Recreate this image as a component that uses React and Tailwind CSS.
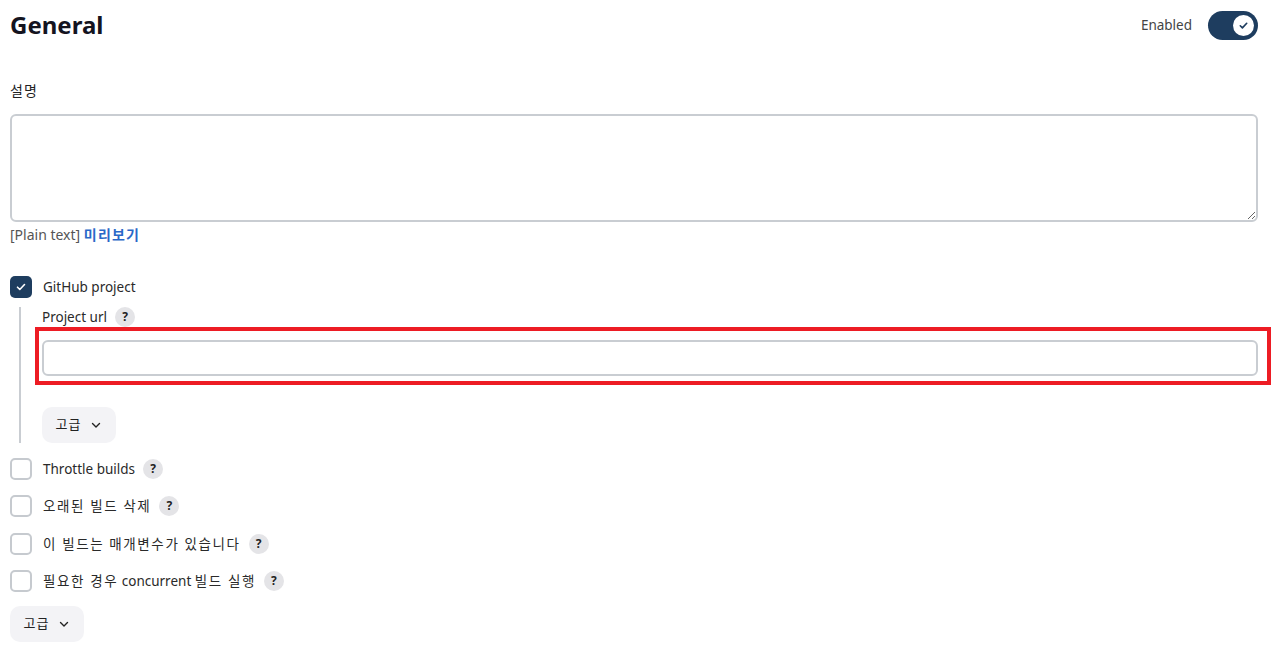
import React from "react";

const font = { fontFamily: '"Noto Sans", "Noto Sans CJK KR", sans-serif' };

function Help() {
  return (
    <span className="ml-[8px] inline-flex h-[20px] w-[20px] items-center justify-center rounded-full bg-[#e4e4e7] text-[12px] font-bold leading-none text-[#222]">
      ?
    </span>
  );
}

function Chevron() {
  return (
    <svg width="12" height="12" viewBox="0 0 12 12" fill="none" className="ml-[9px]">
      <path d="M2.5 4.5L6 8l3.5-3.5" stroke="#222" strokeWidth="1.4" strokeLinecap="round" strokeLinejoin="round" />
    </svg>
  );
}

function AdvButton() {
  return (
    <button className="flex h-[36px] w-[74px] items-center justify-center rounded-[10px] bg-[#f3f3f6] text-[13px] tracking-[1px] text-[#222]">
      <span>고급</span>
      <Chevron />
    </button>
  );
}

function Check({ checked }) {
  if (checked) {
    return (
      <span className="flex h-[22px] w-[22px] items-center justify-center rounded-[5px] bg-[#1e3d5f]">
        <svg width="12" height="12" viewBox="0 0 12 12" fill="none">
          <path d="M2.5 6.2l2.3 2.3 4.7-5" stroke="white" strokeWidth="1.6" strokeLinecap="round" strokeLinejoin="round" />
        </svg>
      </span>
    );
  }
  return <span className="h-[22px] w-[22px] rounded-[5px] border-2 border-[#c6cacf] bg-white" />;
}

function Row({ children, className = "" }) {
  return (
    <div className={"flex h-[22px] items-center " + className}>
      <Check />
      <span className="ml-[11px] text-[13.5px] text-[#2a2a2a]">{children}</span>
      <Help />
    </div>
  );
}

const K = ({ children }) => <span className="tracking-[1.6px]">{children}</span>;

export default function App() {
  return (
    <div className="min-h-[663px] w-[1288px] bg-white pl-[10px] pr-[30px] text-[#1f1f1f]" style={font}>
      <div className="flex h-[50px] items-center justify-between">
        <h1 className="text-[24px] font-bold leading-none text-[#14141f]">General</h1>
        <div className="flex items-center">
          <span className="text-[13.5px] text-[#444]">Enabled</span>
          <span className="ml-[16px] flex h-[29px] w-[50px] items-center justify-end rounded-full bg-[#1e3d5f] pr-[4px]">
            <span className="flex h-[21px] w-[21px] items-center justify-center rounded-full bg-white">
              <svg width="11" height="11" viewBox="0 0 12 12" fill="none">
                <path d="M2.5 6.3l2.3 2.3 4.7-5" stroke="#1e3d5f" strokeWidth="1.8" strokeLinecap="round" strokeLinejoin="round" />
              </svg>
            </span>
          </span>
        </div>
      </div>

      <div className="mt-[31px] h-[20px] text-[14px] leading-[20px] tracking-[1px] text-[#222]">설명</div>
      <textarea className="mt-[13px] block h-[108px] w-full resize-y rounded-[6px] border-2 border-[#c9cdd2] bg-white" />
      <div className="mt-[3px] h-[20px] text-[14px] leading-[20px] text-[#555]">
        [Plain text] <span className="font-bold tracking-[1.2px] text-[#2a68c8]">미리보기</span>
      </div>

      <div className="mt-[31px] flex h-[22px] items-center">
        <Check checked />
        <span className="ml-[11px] text-[13.5px] text-[#2a2a2a]">GitHub project</span>
      </div>

      <div className="ml-[9px] mt-[9px] border-l-2 border-[#c9cdd2] pl-[21px]">
        <div className="flex h-[20px] items-center">
          <span className="text-[13.5px] text-[#2a2a2a]">Project url</span>
          <Help />
        </div>
        <div className="relative mt-[13px]">
          <input className="block h-[36px] w-full rounded-[6px] border-2 border-[#c9cdd2] bg-white" />
          <div className="pointer-events-none absolute -bottom-[9px] -left-[7px] -right-[13px] -top-[13px] border-4 border-[#ed1c24]" />
        </div>
        <div className="mt-[31px]">
          <AdvButton />
        </div>
      </div>

      <Row className="mt-[15px]">Throttle builds</Row>
      <Row className="mt-[15px]"><K>오래된 빌드 삭제</K></Row>
      <Row className="mt-[16px]"><K>이 빌드는 매개변수가 있습니다</K></Row>
      <Row className="mt-[15px]"><K>필요한 경우</K> concurrent <K>빌드 실행</K></Row>

      <div className="mt-[14px]">
        <AdvButton />
      </div>
    </div>
  );
}
